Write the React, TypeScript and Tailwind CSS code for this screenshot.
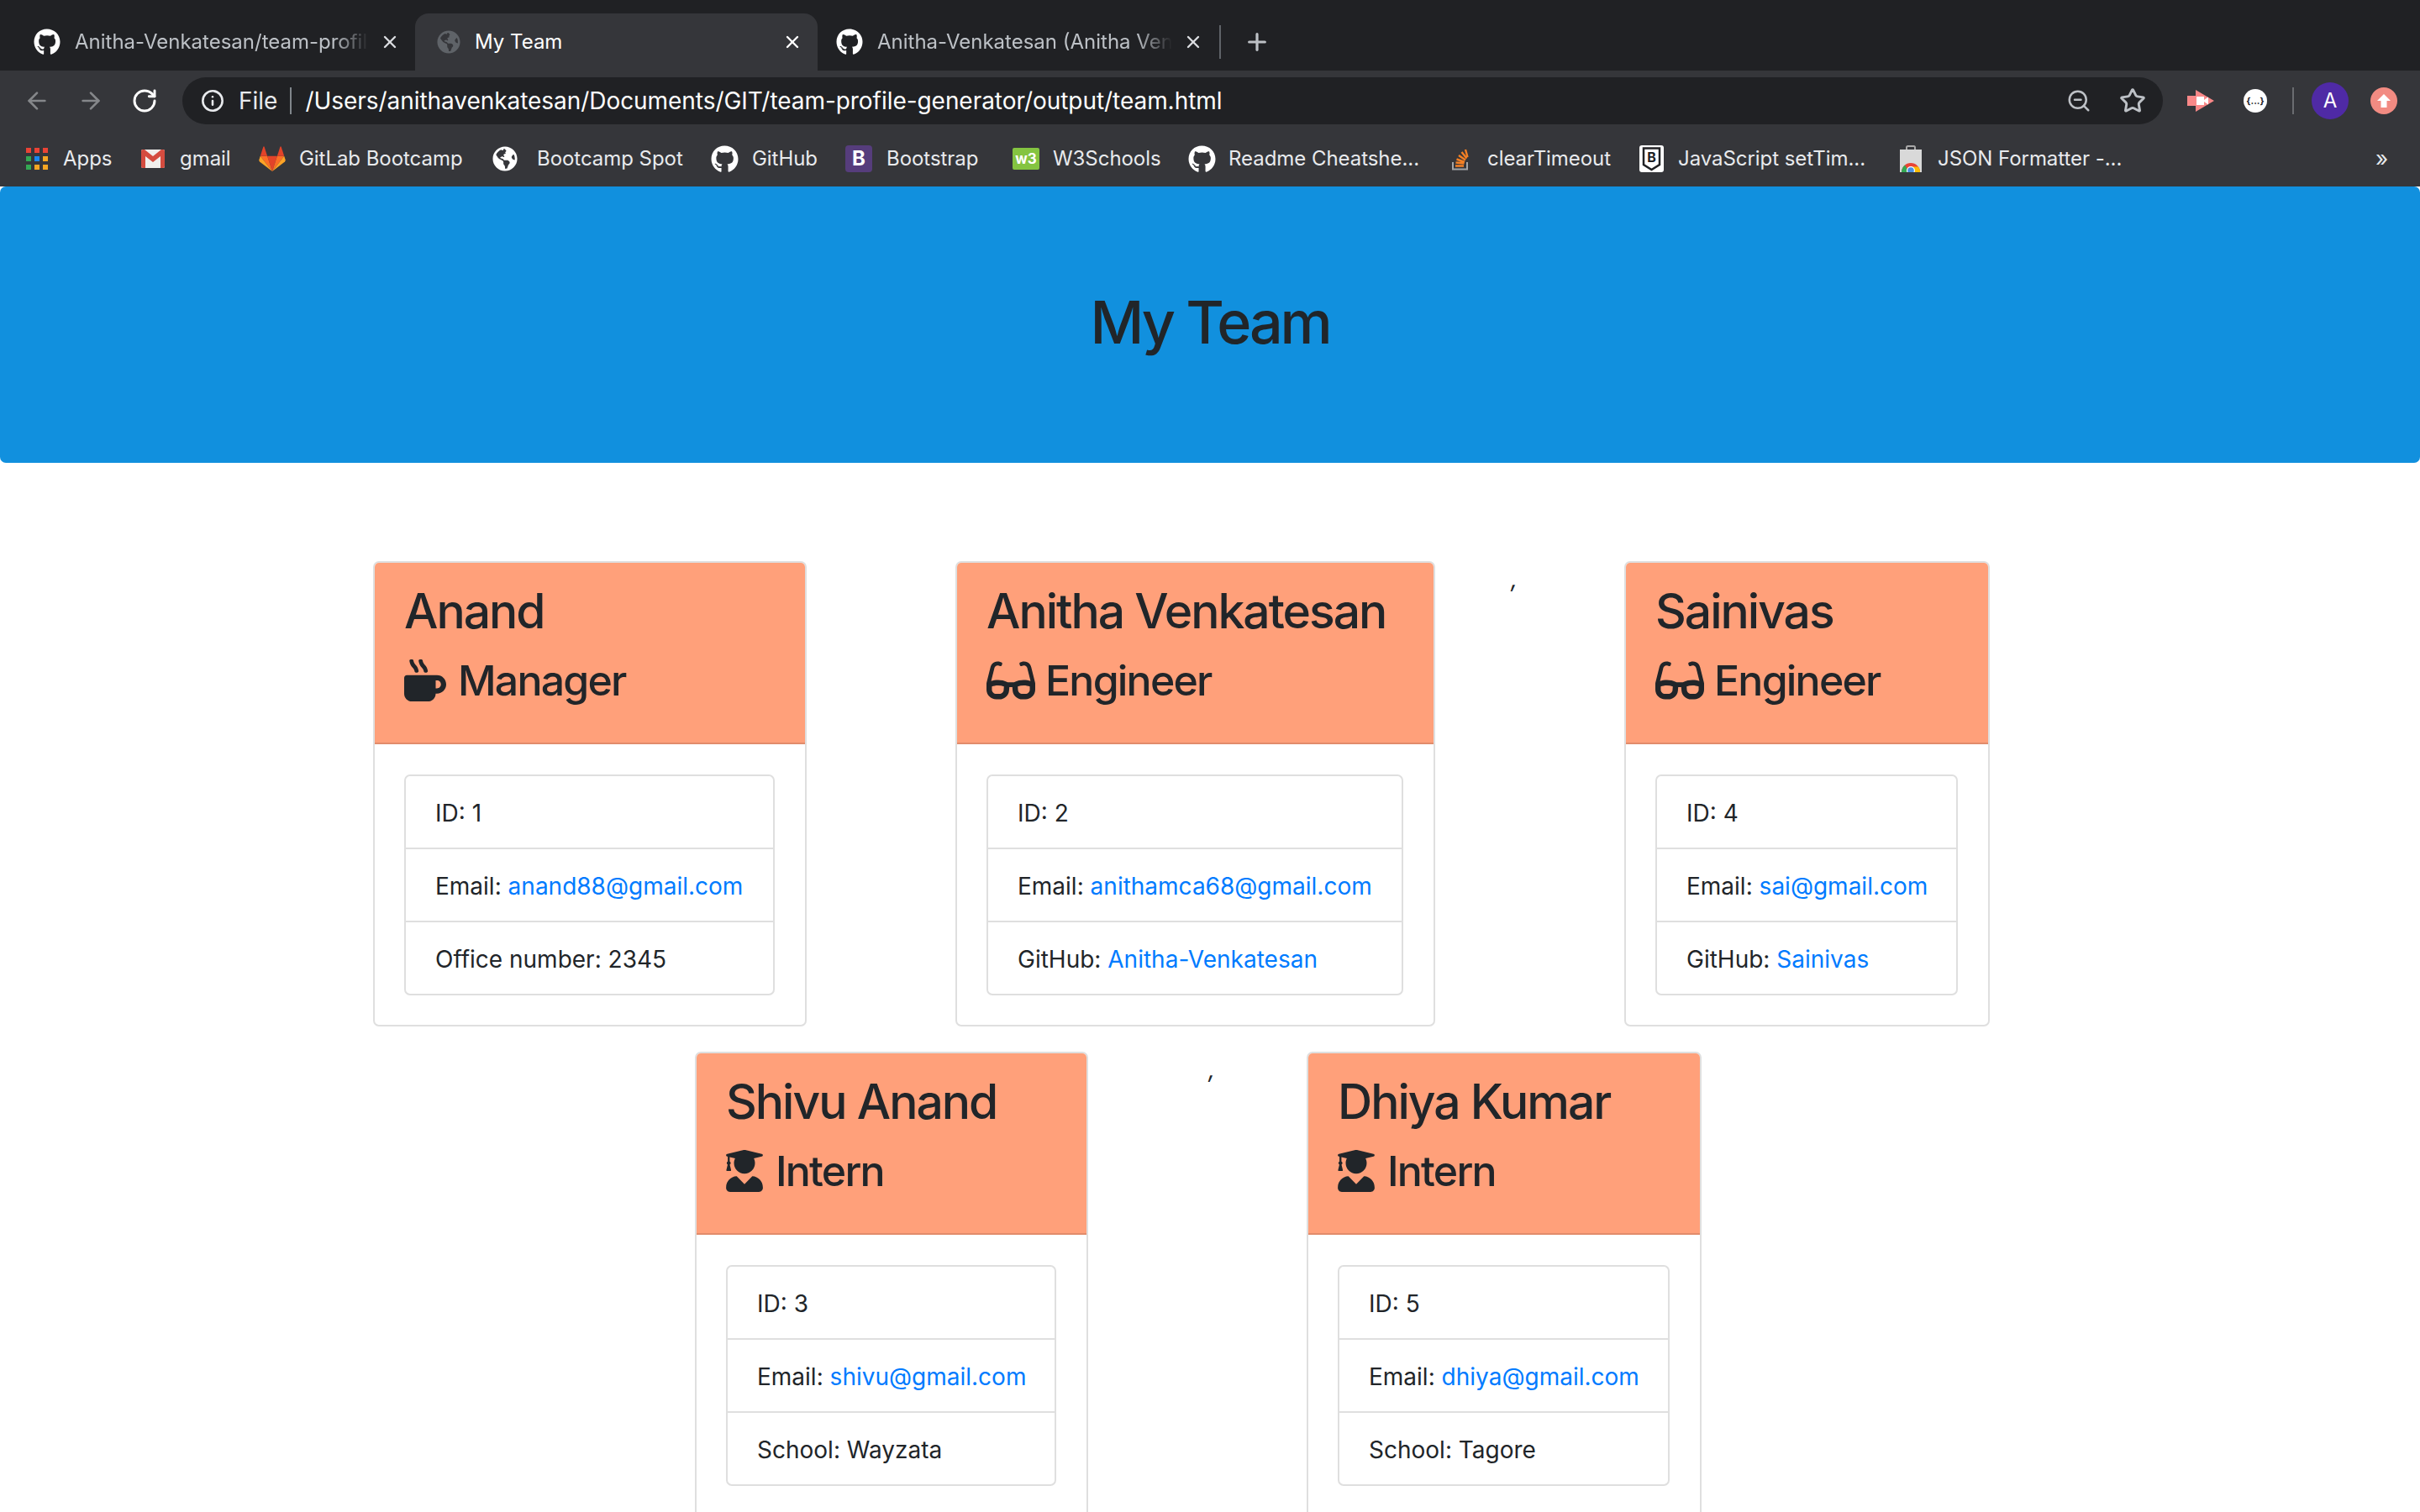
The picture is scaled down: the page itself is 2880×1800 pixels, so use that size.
import { ArrowLeft, ArrowRight, Info, Plus, RotateCw, Star, X, ZoomOut } from 'lucide-react';
import { FaGithub, FaGlasses, FaGlobeAmericas, FaMugHot, FaUserGraduate } from 'react-icons/fa';
import type { ReactNode } from 'react';

// Bookmark bar favicons
function AppsIcon() {
  const cells = [
    'bg-[#ea4335]', 'bg-[#ea4335]', 'bg-[#ea4335]',
    'bg-[#34a853]', 'bg-[#1a87f0]', 'bg-[#f5a623]',
    'bg-[#34a853]', 'bg-[#f5a623]', 'bg-[#f5a623]',
  ];
  return (
    <div className="grid grid-cols-3 gap-[4px] w-[26px]">
      {cells.map((c, i) => (
        <div key={i} className={`w-[6px] h-[6px] ${c}`} />
      ))}
    </div>
  );
}

function GmailIcon() {
  return (
    <svg width="28" height="22" viewBox="0 0 28 22">
      <rect x="0" y="0" width="28" height="22" rx="2" fill="#f1efec" />
      <path d="M0 2v18a2 2 0 0 0 2 2h3V8l9 7 9-7v14h3a2 2 0 0 0 2-2V2a2 2 0 0 0-2-2h-2l-10 8L4 0H2a2 2 0 0 0-2 2z" fill="#d54c3f" />
    </svg>
  );
}

function GitlabIcon() {
  return (
    <svg width="32" height="30" viewBox="0 0 32 30">
      <polygon points="16,30 10.1,11.8 21.9,11.8" fill="#e24329" />
      <polygon points="16,30 10.1,11.8 1.8,11.8" fill="#fc6d26" />
      <polygon points="16,30 21.9,11.8 30.2,11.8" fill="#fc6d26" />
      <polygon points="1.8,11.8 0.2,16.8 1,18.6 16,30" fill="#fca326" />
      <polygon points="30.2,11.8 31.8,16.8 31,18.6 16,30" fill="#fca326" />
      <polygon points="1.8,11.8 10.1,11.8 6.5,0.6 5.4,0.6" fill="#e24329" />
      <polygon points="30.2,11.8 21.9,11.8 25.5,0.6 26.6,0.6" fill="#e24329" />
    </svg>
  );
}

function BootstrapIcon() {
  return (
    <div className="w-[32px] h-[32px] rounded-[4px] bg-[#563d7c] flex items-center justify-center text-white text-[24px] font-bold">
      B
    </div>
  );
}

function W3Icon() {
  return (
    <div className="w-[32px] h-[26px] rounded-[2px] bg-[#84c441] flex items-center justify-center text-white text-[17px] font-bold leading-none">
      w3
    </div>
  );
}

function StackIcon() {
  return (
    <svg width="20" height="28" viewBox="0 0 20 28" fill="none">
      <path d="M1 18v8.5h17V18" stroke="#a4a5a7" strokeWidth="2" />
      <path d="M4 22.5h10M4.5 18.5l10 1M5.5 14.5l9.5 3.5M8 10l8 5.5M11.5 6l6 7.5M16 3l2.5 9" stroke="#f48024" strokeWidth="2.4" />
    </svg>
  );
}

function ShieldIcon() {
  return (
    <svg width="29" height="32" viewBox="0 0 29 32">
      <rect width="29" height="32" rx="3" fill="#fff" />
      <path d="M5 3.5h19v19.5l-9.500 6-9.500-6z" fill="none" stroke="#202124" strokeWidth="2.500" />
      <text x="14.500" y="20" textAnchor="middle" fontSize="16" fontWeight="700" fill="#202124" fontFamily="Inter, sans-serif">B</text>
    </svg>
  );
}

function StoreIcon() {
  return (
    <svg width="26" height="32" viewBox="0 0 26 32">
      <path d="M8 6V2.500a1.500 1.500 0 0 1 1.500-1.500h7a1.500 1.500 0 0 1 1.500 1.500V6" fill="none" stroke="#a9a9a9" strokeWidth="2" />
      <rect y="5" width="26" height="27" fill="#d9d9d9" />
      <path d="M2 32a11 11 0 0 1 22 0z" fill="#ea4335" />
      <path d="M2 32a11 11 0 0 1 4-8.500L11 32z" fill="#34a853" />
      <path d="M24 32a11 11 0 0 0-2-6.500H14L16 32z" fill="#fbbc05" />
      <circle cx="13" cy="30" r="5" fill="#fff" />
      <circle cx="13" cy="30" r="3.800" fill="#4a90e2" />
    </svg>
  );
}

function CastIcon() {
  return (
    <svg width="32" height="26" viewBox="0 0 32 26">
      <path d="M10 0l22 13-22 13v-7H0V7h10z" fill="#f98888" />
      <path d="M11 8h9v10h-9z M20 12l5-3.500v9L20 14z" fill="#fff" />
    </svg>
  );
}

function Tab({ width, icon, title, active, close, textWidth }: { width: string; icon: ReactNode; title: string; active?: boolean; close: string; textWidth: string }) {
  return (
    <div className={`${width} ${active ? 'bg-[#35363a] text-white rounded-t-[16px]' : 'text-[#bdc1c6]'} h-[68px] flex items-center shrink-0`}>
      {icon}
      <span className={`${textWidth} overflow-hidden whitespace-nowrap text-[24px] ml-[17px] ${active ? '' : '[mask-image:linear-gradient(to_right,black_88%,transparent)]'}`}>
        {title}
      </span>
      <X className={`${close} ${active ? 'text-white' : 'text-[#dadce0]'}`} size={24} strokeWidth={2.4} />
    </div>
  );
}

const bookmarks = [
  { w: 'w-[137px]', gap: 'ml-[18px]', label: 'Apps', icon: <AppsIcon /> },
  { w: 'w-[140px]', gap: 'ml-[18px]', label: 'gmail', icon: <GmailIcon /> },
  { w: 'w-[278px]', gap: 'ml-[16px]', label: 'GitLab Bootcamp', icon: <GitlabIcon /> },
  { w: 'w-[260px]', gap: 'ml-[23px]', label: 'Bootcamp Spot', icon: <FaGlobeAmericas size={30} className="text-white" /> },
  { w: 'w-[160px]', gap: 'ml-[16px]', label: 'GitHub', icon: <FaGithub size={33} className="text-white" /> },
  { w: 'w-[199px]', gap: 'ml-[17px]', label: 'Bootstrap', icon: <BootstrapIcon /> },
  { w: 'w-[209px]', gap: 'ml-[16px]', label: 'W3Schools', icon: <W3Icon /> },
  { w: 'w-[314px]', gap: 'ml-[15px]', label: 'Readme Cheatshe...', icon: <FaGithub size={33} className="text-white" /> },
  { w: 'w-[223px]', gap: 'ml-[22px]', label: 'clearTimeout', icon: <StackIcon /> },
  { w: 'w-[310px]', gap: 'ml-[17px]', label: 'JavaScript setTim...', icon: <ShieldIcon /> },
  { w: 'w-[300px]', gap: 'ml-[19px]', label: 'JSON Formatter -...', icon: <StoreIcon /> },
];

function Card({ width, name, role, icon, rows }: { width: string; name: string; role: string; icon: ReactNode; rows: ReactNode[] }) {
  return (
    <div className={`${width} shrink-0 h-[554px] bg-white border-2 border-[#dfdfdf] rounded-[7px] overflow-hidden`}>
      <div className="h-[216px] bg-[#ffa07a] border-b-2 border-[#e18c6b] pl-[35px] pt-[23px] text-[#212529] font-medium">
        <h2 className="text-[57px] leading-[69px] tracking-[-2px]">{name}</h2>
        <h3 className="text-[50px] leading-[60px] tracking-[-1.800px] mt-[18px] flex items-center">
          {icon}
          {role}
        </h3>
      </div>
      <div className="ml-[35px] mr-[36px] mt-[36px] border-2 border-[#dfdfdf] rounded-[7px] text-[28px] text-[#212529]">
        {rows.map((row, i) => (
          <div key={i} className={`h-[85px] flex items-center px-[35px] pt-[2px] ${i > 0 ? 'border-t-2 border-[#dfdfdf] h-[87px]' : ''}`}>
            <span className="whitespace-pre">{row}</span>
          </div>
        ))}
      </div>
    </div>
  );
}

function Mail({ label, to }: { label: string; to: string }) {
  return (
    <>
      {label}: <a className="text-[#007bff]">{to}</a>
    </>
  );
}

const roleIcons = {
  manager: <FaMugHot size={50} className="mr-[14px]" />,
  engineer: <FaGlasses size={58} className="mr-[12px]" />,
  intern: <FaUserGraduate size={50} className="-ml-[3px] mr-[12px]" />,
};

export default function App() {
  return (
    <div className="w-[2880px] h-[1800px] overflow-hidden bg-white font-['Inter','Liberation_Sans',sans-serif]">
      {/* Browser chrome */}
      <div className="bg-[#202124] h-[84px] flex items-end">
        <Tab width="w-[494px] pl-[40px]" close="ml-[13px]" textWidth="w-[350px]" icon={<FaGithub size={32} className="text-white" />} title="Anitha-Venkatesan/team-profile-generator" />
        <Tab width="w-[479px] pl-[26px]" close="ml-[250px]" textWidth="w-[116px]" active icon={<FaGlobeAmericas size={28} className="text-[#5f6368]" />} title="My Team" />
        <div className="flex items-center">
          <Tab width="w-[478px] pl-[22px]" close="ml-[13px]" textWidth="w-[351px]" icon={<FaGithub size={32} className="text-white" />} title="Anitha-Venkatesan (Anitha Venkatesan)" />
          <div className="w-[2px] h-[40px] bg-[#5f6368]" />
          <Plus size={32} strokeWidth={2.4} className="ml-[27px] text-[#bdc1c6]" />
        </div>
      </div>
      <div className="bg-[#35363a] h-[72px] flex items-center relative">
        <ArrowLeft size={32} strokeWidth={2} className="ml-[28px] text-[#85878a]" />
        <ArrowRight size={32} strokeWidth={2} className="ml-[32px] text-[#85878a]" />
        <RotateCw size={32} strokeWidth={2.2} className="ml-[32px] text-white" />
        <div className="ml-[29px] w-[2357px] h-[56px] rounded-full bg-[#202124] flex items-center text-white text-[28px]">
          <Info size={28} strokeWidth={2.2} className="ml-[22px] text-[#e8eaed]" />
          <span className="ml-[17px] text-[#e8eaed]">File</span>
          <div className="ml-[15px] w-[2px] h-[32px] bg-[#80868b]" />
          <span className="ml-[16px] tracking-[-0.05px]">/Users/anithavenkatesan/Documents/GIT/team-profile-generator/output/team.html</span>
          <ZoomOut size={30} strokeWidth={2} className="ml-auto mr-[33px] text-[#bdc1c6]" />
          <Star size={32} strokeWidth={2.2} className="mr-[20px] text-[#bdc1c6]" />
        </div>
        <div className="ml-[29px]">
          <CastIcon />
        </div>
        <div className="ml-[35px] w-[28px] h-[28px] rounded-full bg-white text-[#202124] text-[11px] font-bold flex items-center justify-center">{'{...}'}</div>
        <div className="ml-[30px] w-[2px] h-[32px] bg-[#6a6c70]" />
        <div className="ml-[21px] w-[44px] h-[44px] rounded-full bg-[#4f2aa5] text-white text-[24px] flex items-center justify-center">A</div>
        <div className="ml-[26px] w-[32px] h-[32px] rounded-full bg-[#f28b82] flex items-center justify-center">
          <svg width="18" height="18" viewBox="0 0 18 18">
            <path d="M9 1l8 8h-4.500v8h-7V9H1z" fill="#fff" />
          </svg>
        </div>
      </div>
      <div className="bg-[#35363a] h-[66px] flex items-center pl-[31px] text-[24px] tracking-[-0.05px] text-[#e8eaed] whitespace-nowrap">
        {bookmarks.map((b) => (
          <div key={b.label} className={`${b.w} flex items-center shrink-0`}>
            {b.icon}
            <span className={b.gap}>{b.label}</span>
          </div>
        ))}
        <span className="ml-[266px] text-[26px] leading-none">»</span>
      </div>

      {/* Page */}
      <div className="h-[329px] bg-[#1190de] rounded-[7px] flex items-center justify-center pb-[6px]">
        <h1 className="text-[70px] font-medium tracking-[-3.200px] text-[#212529]">My Team</h1>
      </div>
      <div className="mt-[117px] pl-[444px] flex text-[28px] text-[#212529]">
        <Card
          width="w-[516px]"
          name="Anand"
          role="Manager"
          icon={roleIcons.manager}
          rows={['ID: 1', <Mail label="Email" to="anand88@gmail.com" />, 'Office number: 2345']}
        />
        <div className="w-[177px] shrink-0" />
        <Card
          width="w-[571px]"
          name="Anitha Venkatesan"
          role="Engineer"
          icon={roleIcons.engineer}
          rows={['ID: 2', <Mail label="Email" to="anithamca68@gmail.com" />, <Mail label="GitHub" to="Anitha-Venkatesan" />]}
        />
        <div className="w-[225px] shrink-0 pl-[90px] pt-[5px] leading-[32px] italic">,</div>
        <Card
          width="w-[435px]"
          name="Sainivas"
          role="Engineer"
          icon={roleIcons.engineer}
          rows={['ID: 4', <Mail label="Email" to="sai@gmail.com" />, <Mail label="GitHub" to="Sainivas" />]}
        />
      </div>
      <div className="mt-[30px] pl-[827px] flex text-[28px] text-[#212529]">
        <Card
          width="w-[468px]"
          name="Shivu Anand"
          role="Intern"
          icon={roleIcons.intern}
          rows={['ID: 3', <Mail label="Email" to="shivu@gmail.com" />, 'School: Wayzata']}
        />
        <div className="w-[260px] shrink-0 pl-[143px] pt-[5px] leading-[32px] italic">,</div>
        <Card
          width="w-[470px]"
          name="Dhiya Kumar"
          role="Intern"
          icon={roleIcons.intern}
          rows={['ID: 5', <Mail label="Email" to="dhiya@gmail.com" />, 'School: Tagore']}
        />
      </div>
    </div>
  );
}
